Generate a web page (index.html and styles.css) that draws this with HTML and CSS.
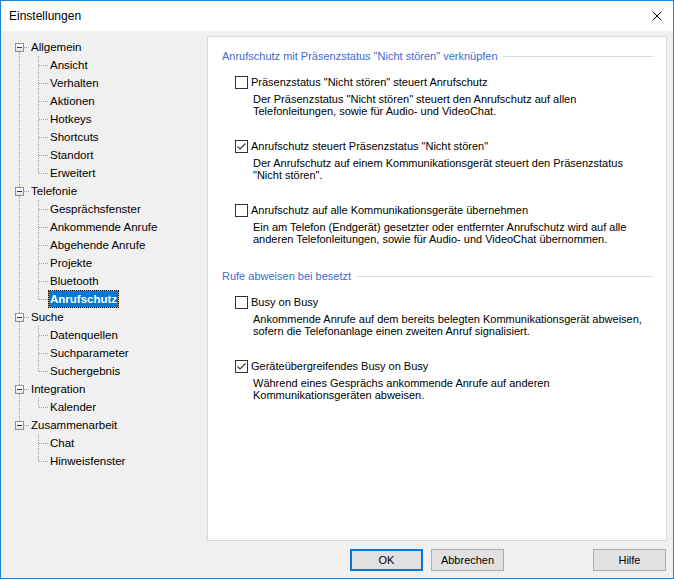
FILE: index.html
```html
<!DOCTYPE html>
<html>
<head>
<meta charset="utf-8">
<title>Einstellungen</title>
<link rel="stylesheet" href="styles.css">
</head>
<body>
<div class="window">
  <div class="titlebar">
    <span class="title">Einstellungen</span>
    <svg class="close" width="10" height="10" viewBox="0 0 10 10"><path d="M0.5 0.5L9.5 9.5M9.5 0.5L0.5 9.5" stroke="#000" stroke-width="1" fill="none"/></svg>
  </div>
  <div class="main">
    <div class="tree">
      <ul class="roots">
        <li>
          <div class="row"><span class="exp"></span><span class="hconn"></span><span class="lbl">Allgemein</span></div>
          <ul class="kids">
            <li><span class="hconn"></span><span class="lbl">Ansicht</span></li>
            <li><span class="hconn"></span><span class="lbl">Verhalten</span></li>
            <li><span class="hconn"></span><span class="lbl">Aktionen</span></li>
            <li><span class="hconn"></span><span class="lbl">Hotkeys</span></li>
            <li><span class="hconn"></span><span class="lbl">Shortcuts</span></li>
            <li><span class="hconn"></span><span class="lbl">Standort</span></li>
            <li><span class="hconn"></span><span class="lbl">Erweitert</span></li>
          </ul>
        </li>
        <li>
          <div class="row"><span class="exp"></span><span class="hconn"></span><span class="lbl">Telefonie</span></div>
          <ul class="kids">
            <li><span class="hconn"></span><span class="lbl">Gesprächsfenster</span></li>
            <li><span class="hconn"></span><span class="lbl">Ankommende Anrufe</span></li>
            <li><span class="hconn"></span><span class="lbl">Abgehende Anrufe</span></li>
            <li><span class="hconn"></span><span class="lbl">Projekte</span></li>
            <li><span class="hconn"></span><span class="lbl">Bluetooth</span></li>
            <li><span class="hconn"></span><span class="lbl sel">Anrufschutz</span></li>
          </ul>
        </li>
        <li>
          <div class="row"><span class="exp"></span><span class="hconn"></span><span class="lbl">Suche</span></div>
          <ul class="kids">
            <li><span class="hconn"></span><span class="lbl">Datenquellen</span></li>
            <li><span class="hconn"></span><span class="lbl">Suchparameter</span></li>
            <li><span class="hconn"></span><span class="lbl">Suchergebnis</span></li>
          </ul>
        </li>
        <li>
          <div class="row"><span class="exp"></span><span class="hconn"></span><span class="lbl">Integration</span></div>
          <ul class="kids">
            <li><span class="hconn"></span><span class="lbl">Kalender</span></li>
          </ul>
        </li>
        <li>
          <div class="row"><span class="exp"></span><span class="hconn"></span><span class="lbl">Zusammenarbeit</span></div>
          <ul class="kids">
            <li><span class="hconn"></span><span class="lbl">Chat</span></li>
            <li><span class="hconn"></span><span class="lbl">Hinweisfenster</span></li>
          </ul>
        </li>
      </ul>
    </div>
    <div class="panel">
      <div class="section">
        <div class="group-head"><span>Anrufschutz mit Präsenzstatus "Nicht stören" verknüpfen</span><span class="line"></span></div>
        <div class="opts">
          <div class="opt">
            <div class="opt-head"><span class="cb"></span><span>Präsenzstatus "Nicht stören" steuert Anrufschutz</span></div>
            <div class="opt-desc">Der Präsenzstatus "Nicht stören" steuert den Anrufschutz auf allen<br>Telefonleitungen, sowie für Audio- und VideoChat.</div>
          </div>
          <div class="opt">
            <div class="opt-head"><span class="cb"><svg width="11" height="11" viewBox="0 0 11 11"><path d="M1.5 5.5L4 8L9.5 2.5" stroke="#333" stroke-width="1.1" fill="none"/></svg></span><span>Anrufschutz steuert Präsenzstatus "Nicht stören"</span></div>
            <div class="opt-desc">Der Anrufschutz auf einem Kommunikationsgerät steuert den Präsenzstatus<br>"Nicht stören".</div>
          </div>
          <div class="opt">
            <div class="opt-head"><span class="cb"></span><span>Anrufschutz auf alle Kommunikationsgeräte übernehmen</span></div>
            <div class="opt-desc">Ein am Telefon (Endgerät) gesetzter oder entfernter Anrufschutz wird auf alle<br>anderen Telefonleitungen, sowie für Audio- und VideoChat übernommen.</div>
          </div>
        </div>
      </div>
      <div class="section second">
        <div class="group-head"><span>Rufe abweisen bei besetzt</span><span class="line"></span></div>
        <div class="opts">
          <div class="opt">
            <div class="opt-head"><span class="cb"></span><span>Busy on Busy</span></div>
            <div class="opt-desc">Ankommende Anrufe auf dem bereits belegten Kommunikationsgerät abweisen,<br>sofern die Telefonanlage einen zweiten Anruf signalisiert.</div>
          </div>
          <div class="opt">
            <div class="opt-head"><span class="cb"><svg width="11" height="11" viewBox="0 0 11 11"><path d="M1.5 5.5L4 8L9.5 2.5" stroke="#333" stroke-width="1.1" fill="none"/></svg></span><span>Geräteübergreifendes Busy on Busy</span></div>
            <div class="opt-desc">Während eines Gesprächs ankommende Anrufe auf anderen<br>Kommunikationsgeräten abweisen.</div>
          </div>
        </div>
      </div>
    </div>
  </div>
  <div class="buttons">
    <button class="btn default">OK</button>
    <button class="btn">Abbrechen</button>
    <button class="btn help">Hilfe</button>
  </div>
</div>
</body>
</html>
```
FILE: styles.css
```css
* { box-sizing: border-box; }
html, body { margin: 0; padding: 0; }
body { width: 674px; height: 579px; overflow: hidden; background: #ffffff; }

.window {
  width: 674px;
  height: 579px;
  border: 1px solid #1883d7;
  background: #f0f0f0;
  display: flex;
  flex-direction: column;
  font-family: "Liberation Sans", Arial, sans-serif;
  color: #000;
}

.titlebar {
  height: 30px;
  flex: none;
  background: #ffffff;
  display: flex;
  align-items: center;
  justify-content: space-between;
  padding: 0 11px 0 8px;
}
.title { font-size: 12px; }
.close { display: block; }

.main {
  display: flex;
  padding-top: 5px;
  height: 510px;
  flex: none;
}

/* Tree view */
.tree {
  width: 206px;
  flex: none;
  padding-top: 2px;
  font-size: 11.5px;
}
.tree ul { list-style: none; margin: 0; padding: 0; }
.roots { position: relative; }
.roots::before {
  content: "";
  position: absolute;
  left: 18px;
  top: 9px;
  bottom: 45px;
  border-left: 1px dotted #a0a0a0;
}
.row, .kids li {
  height: 18px;
  display: flex;
  align-items: center;
}
.row { padding-left: 14px; }
.exp {
  position: relative;
  width: 9px;
  height: 9px;
  flex: none;
  border: 1px solid #919191;
  background: linear-gradient(#ffffff, #e4e4e4);
}
.exp::after {
  content: "";
  position: absolute;
  left: 1px;
  top: 3px;
  width: 5px;
  height: 1px;
  background: #1e3a6e;
}
.hconn {
  height: 0;
  flex: none;
  border-top: 1px dotted #a0a0a0;
}
.row .hconn { width: 5px; }
.kids { position: relative; }
.kids::before {
  content: "";
  position: absolute;
  left: 37px;
  top: 0;
  bottom: 9px;
  border-left: 1px dotted #a0a0a0;
}
.kids li { padding-left: 38px; }
.kids .hconn { width: 9px; }
.lbl {
  height: 18px;
  line-height: 18px;
  padding: 0 2px;
  white-space: nowrap;
}
.lbl.sel {
  background: #0078d7;
  color: #ffffff;
  font-weight: bold;
  box-shadow: inset 0 0 0 1px #e8a040;
  outline: 1px dotted #000;
  outline-offset: -1px;
}

/* Right panel */
.panel {
  width: 460px;
  height: 505px;
  flex: none;
  background: #ffffff;
  border: 1px solid #d9d9d9;
  padding: 13px 13px 0 14px;
  font-size: 11px;
}
.section.second { margin-top: 25px; }
.group-head {
  display: flex;
  align-items: center;
  height: 13px;
  line-height: 13px;
  color: #3d6ad6;
  white-space: nowrap;
}
.group-head .line {
  flex: 1;
  height: 0;
  border-top: 1px solid #d5dce6;
  margin-left: 5px;
}
.opts { padding-left: 13px; }
.opt { margin-top: 22px; }
.opt:first-child { margin-top: 12px; }
.opt-head {
  display: flex;
  align-items: center;
  height: 14px;
  white-space: nowrap;
}
.cb {
  width: 13px;
  height: 13px;
  flex: none;
  border: 1px solid #333333;
  background: #ffffff;
  margin-right: 3px;
  display: flex;
}
.cb svg { display: block; }
.opt-desc {
  padding-left: 18px;
  margin-top: 4px;
  line-height: 12px;
  white-space: nowrap;
}

/* Buttons */
.buttons {
  display: flex;
  margin-top: 8px;
  height: 22px;
  flex: none;
  padding-left: 349px;
  padding-right: 7px;
}
.btn {
  width: 73px;
  height: 22px;
  margin: 0;
  padding: 0;
  border: 1px solid #adadad;
  background: #e1e1e1;
  font-family: "Liberation Sans", Arial, sans-serif;
  font-size: 11px;
  color: #000;
  display: flex;
  align-items: center;
  justify-content: center;
}
.btn + .btn { margin-left: 8px; }
.btn.default { border: 2px solid #0078d7; }
.btn.help { margin-left: auto; }
```
